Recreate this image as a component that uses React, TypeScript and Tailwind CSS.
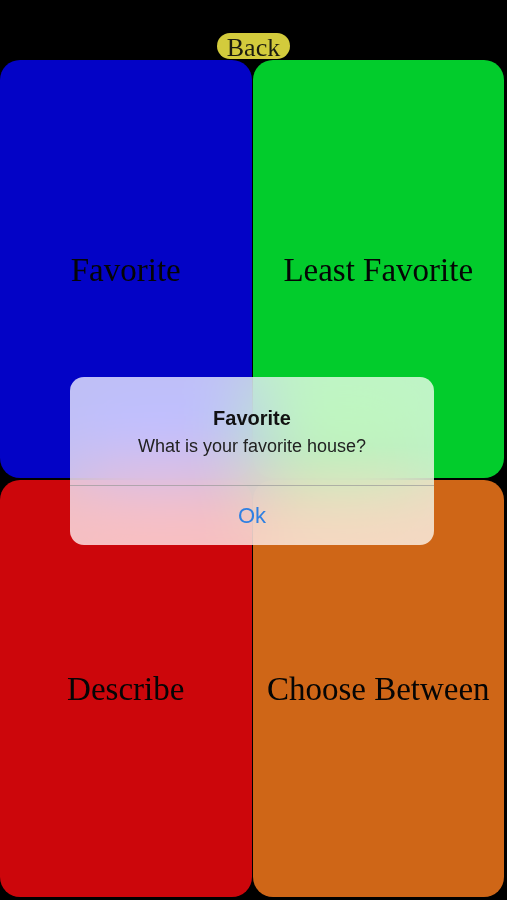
import React from "react";

const tiles = [
  { label: "Favorite", bg: "bg-[#0303c6]" },
  { label: "Least Favorite", bg: "bg-[#02cc2c]" },
  { label: "Describe", bg: "bg-[#cc060b]" },
  { label: "Choose Between", bg: "bg-[#cf6617]" },
];

export default function App() {
  return (
    <main className="relative w-[507px] h-[900px] bg-black flex flex-col overflow-hidden">
      {/* top bar with back button */}
      <div className="h-[60px] flex items-end justify-center pb-px">
        <button className="w-[73px] h-[26px] rounded-full bg-[#d3cb3c] text-[#1c1c10] text-[26px] leading-none pt-[3px] font-['Liberation_Serif',serif] flex items-center justify-center">
          Back
        </button>
      </div>

      {/* 2x2 grid of choices */}
      <div className="flex-1 grid grid-cols-2 grid-rows-2 gap-x-px gap-y-[2px] pr-[3px] pb-[3px]">
        {tiles.map((t) => (
          <div
            key={t.label}
            className={`${t.bg} rounded-[20px] flex items-center justify-center pt-[3px] text-[33px] text-[#050505] font-['Liberation_Serif',serif]`}
          >
            {t.label}
          </div>
        ))}
      </div>

      {/* alert dialog */}
      <div className="absolute left-[70px] top-[377px] w-[364px] h-[168px] rounded-[14px] bg-white/75 backdrop-blur-2xl backdrop-saturate-[1.4] flex flex-col overflow-hidden font-['Liberation_Sans',Arial,sans-serif]">
        <div className="h-[108px] flex flex-col items-center pt-[29px]">
          <h2 className="text-[20px] leading-[24px] font-bold text-[#111]">Favorite</h2>
          <p className="mt-[5px] text-[18px] leading-[22px] text-[#222]">What is your favorite house?</p>
        </div>
        <div className="h-px bg-[#9a9a9a]/70" />
        <button className="flex-1 flex items-center justify-center text-[22px] text-[#2f80e2]">
          Ok
        </button>
      </div>
    </main>
  );
}
